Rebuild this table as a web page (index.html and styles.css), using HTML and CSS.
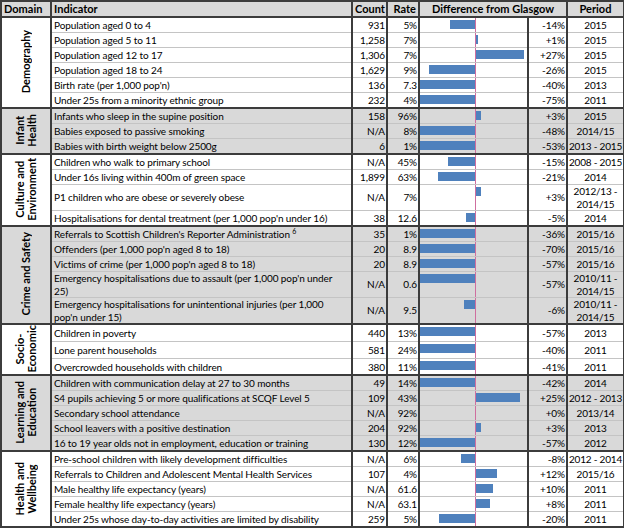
FILE: index.html
```html
<!DOCTYPE html>
<html>
<head>
<meta charset="utf-8">
<link rel="stylesheet" href="styles.css">
</head>
<body>
<table class="tbl">
  <colgroup>
    <col class="w-dom"><col class="w-ind"><col class="w-cnt"><col class="w-rate"><col class="w-bar"><col class="w-val"><col class="w-per">
  </colgroup>
  <thead>
    <tr>
      <th class="h-dom">Domain</th>
      <th class="h-ind">Indicator</th>
      <th class="h-num">Count</th>
      <th class="h-num">Rate</th>
      <th class="h-diff" colspan="2">Difference from Glasgow</th>
      <th class="h-per">Period</th>
    </tr>
  </thead>
  <tbody>
    <tr><td class="dom" rowspan="6"><span>Demography</span></td><td class="ind">Population aged 0 to 4</td><td class="num">931</td><td class="num">5%</td><td class="bar"><div class="bars"><div class="neg"><i style="width:25px"></i></div><div class="pos"></div></div></td><td class="val">-14%</td><td class="per">2015</td></tr>
    <tr><td class="ind">Population aged 5 to 11</td><td class="num">1,258</td><td class="num">7%</td><td class="bar"><div class="bars"><div class="neg"></div><div class="pos"><i style="width:2px"></i></div></div></td><td class="val">+1%</td><td class="per">2015</td></tr>
    <tr><td class="ind">Population aged 12 to 17</td><td class="num">1,306</td><td class="num">7%</td><td class="bar"><div class="bars"><div class="neg"></div><div class="pos"><i style="width:48px"></i></div></div></td><td class="val">+27%</td><td class="per">2015</td></tr>
    <tr><td class="ind">Population aged 18 to 24</td><td class="num">1,629</td><td class="num">9%</td><td class="bar"><div class="bars"><div class="neg"><i style="width:46px"></i></div><div class="pos"></div></div></td><td class="val">-26%</td><td class="per">2015</td></tr>
    <tr><td class="ind">Birth rate (per 1,000 pop'n)</td><td class="num">136</td><td class="num">7.3</td><td class="bar"><div class="bars"><div class="neg"><i style="width:71px"></i></div><div class="pos"></div></div></td><td class="val">-40%</td><td class="per">2013</td></tr>
    <tr><td class="ind">Under 25s from a minority ethnic group</td><td class="num">232</td><td class="num">4%</td><td class="bar"><div class="bars"><div class="neg"><i style="width:133px"></i></div><div class="pos"></div></div></td><td class="val">-75%</td><td class="per">2011</td></tr>
  </tbody>
  <tbody class="alt">
    <tr><td class="dom" rowspan="3"><span>Infant<br>Health</span></td><td class="ind">Infants who sleep in the supine position</td><td class="num">158</td><td class="num">96%</td><td class="bar"><div class="bars"><div class="neg"></div><div class="pos"><i style="width:5px"></i></div></div></td><td class="val">+3%</td><td class="per">2015</td></tr>
    <tr><td class="ind">Babies exposed to passive smoking</td><td class="num">N/A</td><td class="num">8%</td><td class="bar"><div class="bars"><div class="neg"><i style="width:85px"></i></div><div class="pos"></div></div></td><td class="val">-48%</td><td class="per">2014/15</td></tr>
    <tr><td class="ind">Babies with birth weight below 2500g</td><td class="num">6</td><td class="num">1%</td><td class="bar"><div class="bars"><div class="neg"><i style="width:94px"></i></div><div class="pos"></div></div></td><td class="val">-53%</td><td class="per">2013 - 2015</td></tr>
  </tbody>
  <tbody>
    <tr><td class="dom" rowspan="4"><span>Culture and<br>Environment</span></td><td class="ind">Children who walk to primary school</td><td class="num">N/A</td><td class="num">45%</td><td class="bar"><div class="bars"><div class="neg"><i style="width:27px"></i></div><div class="pos"></div></div></td><td class="val">-15%</td><td class="per">2008 - 2015</td></tr>
    <tr><td class="ind">Under 16s living within 400m of green space</td><td class="num">1,899</td><td class="num">63%</td><td class="bar"><div class="bars"><div class="neg"><i style="width:37px"></i></div><div class="pos"></div></div></td><td class="val">-21%</td><td class="per">2014</td></tr>
    <tr class="tall"><td class="ind">P1 children who are obese or severely obese</td><td class="num">N/A</td><td class="num">7%</td><td class="bar"><div class="bars"><div class="neg"></div><div class="pos"><i style="width:5px"></i></div></div></td><td class="val">+3%</td><td class="per">2012/13 -<br>2014/15</td></tr>
    <tr><td class="ind">Hospitalisations for dental treatment (per 1,000 pop'n under 16)</td><td class="num">38</td><td class="num">12.6</td><td class="bar"><div class="bars"><div class="neg"><i style="width:9px"></i></div><div class="pos"></div></div></td><td class="val">-5%</td><td class="per">2014</td></tr>
  </tbody>
  <tbody class="alt">
    <tr><td class="dom" rowspan="5"><span>Crime and Safety</span></td><td class="ind">Referrals to Scottish Children's Reporter Administration <sup>6</sup></td><td class="num">35</td><td class="num">1%</td><td class="bar"><div class="bars"><div class="neg"><i style="width:64px"></i></div><div class="pos"></div></div></td><td class="val">-36%</td><td class="per">2015/16</td></tr>
    <tr><td class="ind">Offenders (per 1,000 pop'n aged 8 to 18)</td><td class="num">20</td><td class="num">8.9</td><td class="bar"><div class="bars"><div class="neg"><i style="width:125px"></i></div><div class="pos"></div></div></td><td class="val">-70%</td><td class="per">2015/16</td></tr>
    <tr><td class="ind">Victims of crime (per 1,000 pop'n aged 8 to 18)</td><td class="num">20</td><td class="num">8.9</td><td class="bar"><div class="bars"><div class="neg"><i style="width:101px"></i></div><div class="pos"></div></div></td><td class="val">-57%</td><td class="per">2015/16</td></tr>
    <tr class="tall"><td class="ind">Emergency hospitalisations due to assault (per 1,000 pop'n under<br>25)</td><td class="num">N/A</td><td class="num">0.6</td><td class="bar"><div class="bars"><div class="neg"><i style="width:101px"></i></div><div class="pos"></div></div></td><td class="val">-57%</td><td class="per">2010/11 -<br>2014/15</td></tr>
    <tr class="tall"><td class="ind">Emergency hospitalisations for unintentional injuries (per 1,000<br>pop'n under 15)</td><td class="num">N/A</td><td class="num">9.5</td><td class="bar"><div class="bars"><div class="neg"><i style="width:11px"></i></div><div class="pos"></div></div></td><td class="val">-6%</td><td class="per">2010/11 -<br>2014/15</td></tr>
  </tbody>
  <tbody>
    <tr><td class="dom" rowspan="3"><span>Socio-<br>Economic</span></td><td class="ind">Children in poverty</td><td class="num">440</td><td class="num">13%</td><td class="bar"><div class="bars"><div class="neg"><i style="width:101px"></i></div><div class="pos"></div></div></td><td class="val">-57%</td><td class="per">2013</td></tr>
    <tr><td class="ind">Lone parent households</td><td class="num">581</td><td class="num">24%</td><td class="bar"><div class="bars"><div class="neg"><i style="width:71px"></i></div><div class="pos"></div></div></td><td class="val">-40%</td><td class="per">2011</td></tr>
    <tr><td class="ind">Overcrowded households with children</td><td class="num">380</td><td class="num">11%</td><td class="bar"><div class="bars"><div class="neg"><i style="width:73px"></i></div><div class="pos"></div></div></td><td class="val">-41%</td><td class="per">2011</td></tr>
  </tbody>
  <tbody class="alt">
    <tr><td class="dom" rowspan="5"><span>Learning and<br>Education</span></td><td class="ind">Children with communication delay at 27 to 30 months</td><td class="num">49</td><td class="num">14%</td><td class="bar"><div class="bars"><div class="neg"><i style="width:75px"></i></div><div class="pos"></div></div></td><td class="val">-42%</td><td class="per">2014</td></tr>
    <tr><td class="ind">S4 pupils achieving 5 or more qualifications at SCQF Level 5</td><td class="num">109</td><td class="num">43%</td><td class="bar"><div class="bars"><div class="neg"></div><div class="pos"><i style="width:44px"></i></div></div></td><td class="val">+25%</td><td class="per">2012 - 2013</td></tr>
    <tr><td class="ind">Secondary school attendance</td><td class="num">N/A</td><td class="num">92%</td><td class="bar"><div class="bars"><div class="neg"></div><div class="pos"></div></div></td><td class="val">+0%</td><td class="per">2013/14</td></tr>
    <tr><td class="ind">School leavers with a positive destination</td><td class="num">204</td><td class="num">92%</td><td class="bar"><div class="bars"><div class="neg"></div><div class="pos"><i style="width:5px"></i></div></div></td><td class="val">+3%</td><td class="per">2013</td></tr>
    <tr><td class="ind">16 to 19 year olds not in employment, education or training</td><td class="num">130</td><td class="num">12%</td><td class="bar"><div class="bars"><div class="neg"><i style="width:101px"></i></div><div class="pos"></div></div></td><td class="val">-57%</td><td class="per">2012</td></tr>
  </tbody>
  <tbody>
    <tr><td class="dom" rowspan="5"><span>Health and<br>Wellbeing</span></td><td class="ind">Pre-school children with likely development difficulties</td><td class="num">N/A</td><td class="num">6%</td><td class="bar"><div class="bars"><div class="neg"><i style="width:14px"></i></div><div class="pos"></div></div></td><td class="val">-8%</td><td class="per">2012 - 2014</td></tr>
    <tr><td class="ind">Referrals to Children and Adolescent Mental Health Services</td><td class="num">107</td><td class="num">4%</td><td class="bar"><div class="bars"><div class="neg"></div><div class="pos"><i style="width:21px"></i></div></div></td><td class="val">+12%</td><td class="per">2015/16</td></tr>
    <tr><td class="ind">Male healthy life expectancy (years)</td><td class="num">N/A</td><td class="num">61.6</td><td class="bar"><div class="bars"><div class="neg"></div><div class="pos"><i style="width:17px"></i></div></div></td><td class="val">+10%</td><td class="per">2011</td></tr>
    <tr><td class="ind">Female healthy life expectancy (years)</td><td class="num">N/A</td><td class="num">63.1</td><td class="bar"><div class="bars"><div class="neg"></div><div class="pos"><i style="width:14px"></i></div></div></td><td class="val">+8%</td><td class="per">2011</td></tr>
    <tr><td class="ind">Under 25s whose day-to-day activities are limited by disability</td><td class="num">259</td><td class="num">5%</td><td class="bar"><div class="bars"><div class="neg"><i style="width:36px"></i></div><div class="pos"></div></div></td><td class="val">-20%</td><td class="per">2011</td></tr>
  </tbody>
</table>
</body>
</html>
```
FILE: styles.css
```css
html, body {
  margin: 0;
  padding: 0;
  background: #ffffff;
}

.tbl {
  border-collapse: collapse;
  table-layout: fixed;
  width: 623px;
  font-family: Lato, "Liberation Sans", sans-serif;
  font-size: 10px;
  letter-spacing: -0.1px;
  color: #000;
  border: 2px solid #3c3c3c;
}

.w-dom { width: 50px; }
.w-ind { width: 301px; }
.w-cnt { width: 35px; }
.w-rate { width: 32px; }
.w-bar { width: 109px; }
.w-val { width: 39px; }
.w-per { width: 57px; }

th, td {
  padding: 0 2px;
  height: 14px;
  line-height: 14px;
  white-space: nowrap;
  border-left: 2px solid #3c3c3c;
  border-right: 2px solid #3c3c3c;
  border-top: 1px solid #c4c4c4;
  border-bottom: 1px solid #c4c4c4;
  overflow: hidden;
}

thead th {
  background: #d9d9d9;
  font-weight: bold;
  font-size: 11px;
  letter-spacing: 0;
  height: 14px;
  line-height: 14px;
  border-bottom: 2px solid #3c3c3c;
}

.h-dom, .h-ind { text-align: left; }
.h-num { text-align: right; }
.h-diff, .h-per { text-align: center; }

tbody {
  border-top: 2px solid #3c3c3c;
}

tbody.alt td {
  background: #d9d9d9;
}

.tall td {
  height: 25px;
  line-height: 12.5px;
}

.dom {
  padding: 0;
  text-align: center;
  vertical-align: middle;
  line-height: 12px;
}

.dom span {
  display: inline-block;
  writing-mode: vertical-rl;
  transform: rotate(180deg);
  font-weight: bold;
  font-size: 11px;
  letter-spacing: 0;
  line-height: 12px;
  text-align: center;
  white-space: nowrap;
}

.ind {
  text-align: left;
  padding-left: 2px;
}

.tall .ind {
  white-space: normal;
}

.ind sup {
  font-size: 7px;
  line-height: 0;
  vertical-align: 4px;
}

.num {
  text-align: right;
  padding-right: 1px;
}

.val {
  text-align: right;
  padding-right: 1px;
}

.per {
  text-align: center;
  padding: 0;
  letter-spacing: -0.2px;
}

.bar {
  position: relative;
  padding: 0;
  vertical-align: top;
}

.bar::after {
  content: "";
  position: absolute;
  top: -1px;
  bottom: -1px;
  left: 55px;
  width: 1px;
  background: #cf6f9f;
}

.bars {
  display: flex;
  padding-top: 2px;
}

.neg, .pos {
  height: 9px;
  overflow: hidden;
  display: flex;
}

.neg {
  width: 55px;
  justify-content: flex-end;
}

.pos {
  flex: 1;
  padding-left: 1px;
  justify-content: flex-start;
}

.bars i {
  display: block;
  flex: none;
  height: 9px;
  background: #4f81bd;
}
```
